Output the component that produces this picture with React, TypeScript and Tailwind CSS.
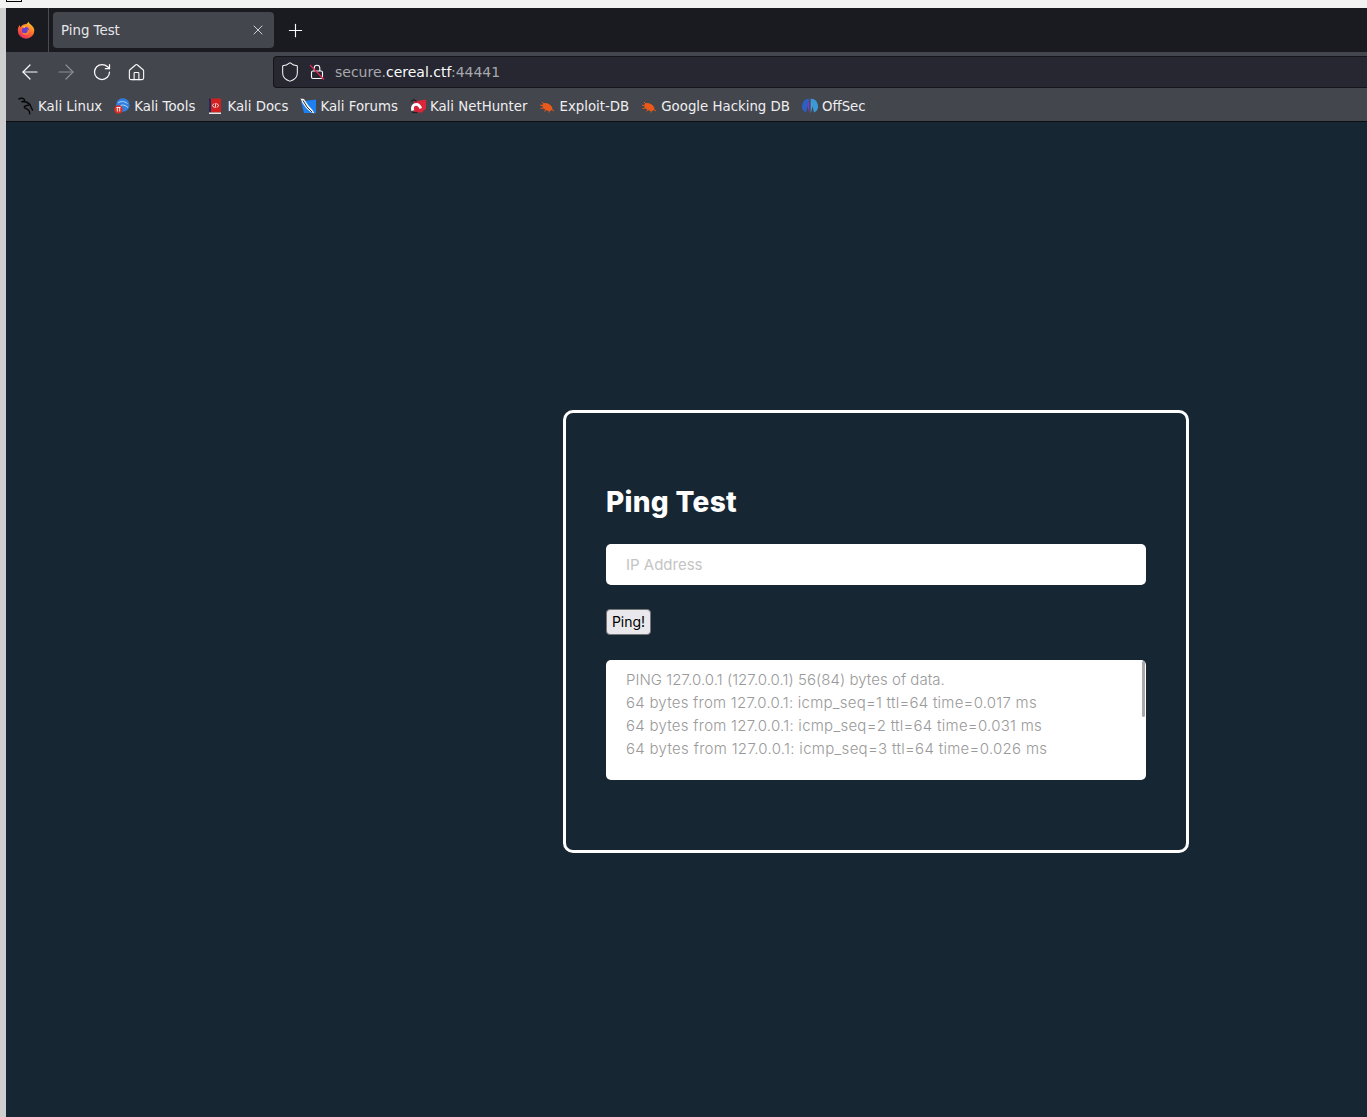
import React from "react";
import { ArrowLeft, ArrowRight, RotateCw, House, Plus, X, Shield } from "lucide-react";

const chromeFont = "font-['DejaVu_Sans',sans-serif]";
const pageFont = "font-['Inter','Open_Sans',sans-serif]";

function FirefoxLogo() {
  return (
    <svg width="18" height="18" viewBox="0 0 18 18">
      <defs>
        <linearGradient id="fx" x1="0.8" y1="0" x2="0.2" y2="1">
          <stop offset="0" stopColor="#ffd02e" />
          <stop offset="0.5" stopColor="#ff6a2c" />
          <stop offset="1" stopColor="#e5246b" />
        </linearGradient>
      </defs>
      <path d="M11.500 0.500c.3 1.800 1.500 2.500 3 3.700 1.800 1.500 2.800 3.200 2.800 5.300A8.200 8.200 0 0 1 .8 9.500c0-2.200.7-4 1.900-5.400.1 1 .4 1.700.9 2.200C4.600 4.200 6.500 3.300 8 3.200c1.600-.1 3-1 3.500-2.700z" fill="url(#fx)" />
      <circle cx="8.500" cy="9.500" r="3.600" fill="#6a3fd0" />
      <path d="M4.800 5.800c1.500-1.200 3.500-1.200 4.700-.3-1 .2-1.500.7-1.600 1.500-1.200-.1-2.300-.5-3.100-1.200z" fill="#ffb03a" />
      <path d="M12.200 9.500A3.800 3.800 0 0 1 5 11.500c1.500 1 4.500 1.200 5.500-.5.400-.8.200-1.800-.5-2.500 1 .1 1.800.4 2.200 1z" fill="#ff8a2c" />
    </svg>
  );
}

function KaliDragon() {
  return (
    <svg width="16" height="18" viewBox="0 0 16 18" fill="none" stroke="#08080a" strokeWidth="1.400" strokeLinecap="round">
      <path d="M0.800 2c2.200-1.300 5-.8 5.700.8C7 4.200 5.300 5 3.300 4.600c3-.5 6.500.6 8.300 2.700 1.500 1.800 1.500 4 3 5.700" />
      <path d="M11.800 7.500c-1.800 1.400-5 .7-5.600 2.400-.3 1.100 2.300 1.900 4 3 1.100.8 1.700 2.200 1.500 4" />
    </svg>
  );
}

function KaliTools() {
  return (
    <svg width="16" height="16" viewBox="0 0 16 16">
      <circle cx="8.800" cy="7" r="6.800" fill="#2f7fe0" />
      <path d="M4 5c2.500-2 6-2 9.500.5M6.500 7.500c2-1 5-.5 7.500 2" stroke="#d5e6fa" strokeWidth="0.800" fill="none" />
      <circle cx="4.500" cy="11.500" r="4.200" fill="#d93025" />
      <path d="M2.500 9.500h4M3.300 9.500v4M5.700 9.500v4" stroke="#fff" strokeWidth="0.900" />
    </svg>
  );
}

function KaliDocs() {
  return (
    <svg width="16" height="17" viewBox="0 0 16 17">
      <rect x="2" y="0.500" width="12" height="14" fill="#d21f1f" />
      <rect x="2" y="0.500" width="2" height="14" fill="#1f2b5a" />
      <rect x="2" y="14.500" width="12" height="1.500" fill="#e8e8e8" />
      <path d="M7 5.500 5.500 7.500 7 9.500M10 5.500l1.500 2L10 9.500M9 5 8 10" stroke="#fff" strokeWidth="0.900" fill="none" />
    </svg>
  );
}

function KaliForums() {
  return (
    <svg width="16" height="16" viewBox="0 0 16 16">
      <path d="M1 3.500 16 1.500v13.500H4z" fill="#1d7ff0" />
      <path d="M0.500 .5 4 1l4 6 4.500 5 2 3.500L10.500 14 6 10 2.500 5z" fill="#f4f6f8" />
      <path d="M3 2.500l4 6.500 5 5" stroke="#1a1a1a" strokeWidth="0.900" fill="none" />
    </svg>
  );
}

function KaliNetHunter() {
  return (
    <svg width="16" height="16" viewBox="0 0 16 16">
      <path d="M4 3.500 16 1.500v9L12 14.500H4z" fill="#d9263a" />
      <path d="M1.500 13c-1.500-4.500 1.200-8 4.800-8 2.800 0 5 2 5.700 5l-2.500 1c-.5-2-1.800-3.300-3.300-3.300-2 0-3 2-2 4.500z" fill="#fff" />
      <path d="M1 3.500 4 1.500l2.500 2" stroke="#222" strokeWidth="1.100" fill="none" />
      <path d="M2 14.500h5.500" stroke="#222" strokeWidth="1.300" />
    </svg>
  );
}

function ExploitBug() {
  return (
    <svg width="16" height="16" viewBox="0 0 16 16">
      <ellipse cx="8.300" cy="9" rx="5.500" ry="3.300" transform="rotate(28 8.300 9)" fill="#e8591a" />
      <path d="M3 4l3 3M1 7l3.500 1M1.500 10.500 5 10M5.500 13.500l2-2.500M10 14.500l.5-2.500M15 13l-3-2" stroke="#e8591a" strokeWidth="1" />
    </svg>
  );
}

function OffSecLogo() {
  return (
    <svg width="16" height="16" viewBox="0 0 16 16">
      <path d="M7.300 .8A7.300 7.300 0 0 0 4 14.600z" fill="#2a5fc4" />
      <path d="M8.700 .8A7.300 7.300 0 0 1 12 14.600z" fill="#3a9ad9" />
      <path d="M7.300 .8 5.300 8 7.300 15.200z" fill="#7a3cc8" />
      <path d="M8.700 .8 10.700 8 8.700 15.200z" fill="#4aa3e0" />
    </svg>
  );
}

function InsecureLock() {
  return (
    <svg width="16" height="18" viewBox="0 0 16 18" fill="none">
      <path d="M5.200 8V5a2.800 2.800 0 0 1 5.600 0v3" stroke="#fbfbfe" strokeWidth="1.100" />
      <rect x="2.500" y="8" width="11" height="7.500" rx="1.500" stroke="#fbfbfe" strokeWidth="1.100" />
      <path d="M1 2 15 16.500" stroke="#e22850" strokeWidth="1.200" />
    </svg>
  );
}

const bookmarks = [
  { name: "Kali Linux", icon: <KaliDragon /> },
  { name: "Kali Tools", icon: <KaliTools /> },
  { name: "Kali Docs", icon: <KaliDocs /> },
  { name: "Kali Forums", icon: <KaliForums /> },
  { name: "Kali NetHunter", icon: <KaliNetHunter /> },
  { name: "Exploit-DB", icon: <ExploitBug /> },
  { name: "Google Hacking DB", icon: <ExploitBug /> },
  { name: "OffSec", icon: <OffSecLogo /> },
];

const pingOutput = [
  { text: "PING 127.0.0.1 (127.0.0.1) 56(84) bytes of data.", tracking: "tracking-[0.04px]" },
  { text: "64 bytes from 127.0.0.1: icmp_seq=1 ttl=64 time=0.017 ms", tracking: "tracking-[0.24px]" },
  { text: "64 bytes from 127.0.0.1: icmp_seq=2 ttl=64 time=0.031 ms", tracking: "tracking-[0.26px]" },
  { text: "64 bytes from 127.0.0.1: icmp_seq=3 ttl=64 time=0.026 ms", tracking: "tracking-[0.3px]" },
];

export default function App() {
  return (
    <div className="flex h-[1117px] w-[1367px] flex-col overflow-hidden bg-[#cfcfcf]">
      {/* Desktop title strip */}
      <div className="h-2 shrink-0 bg-[#f2f2f2]">
        <div className="ml-1.5 h-[2px] w-4 border-x border-b border-black" />
      </div>

      <div className="ml-1.5 flex min-h-0 flex-1 flex-col">
        {/* Tab strip */}
        <div className={`flex h-[44px] shrink-0 items-center bg-[#1a1b20] text-[#fbfbfe] ${chromeFont}`}>
          <div className="flex h-full w-[43px] items-center justify-center border-r border-[#4a4a52] pr-0.5">
            <FirefoxLogo />
          </div>
          <div className="ml-1 flex h-9 w-[221px] items-center justify-between rounded bg-[#44464d] pl-2 pr-2 text-[13.33px] text-[#e6e6ea]">
            <span className="pt-0.5">Ping Test</span>
            <X size={16} strokeWidth={1.300} />
          </div>
          <div className="ml-[11px] flex items-center">
            <Plus size={21} strokeWidth={1.300} />
          </div>
        </div>

        {/* Navigation bar */}
        <div className={`flex h-10 shrink-0 items-center bg-[#44464d] ${chromeFont}`}>
          <div className="flex w-[267px] items-center pl-1.5 text-[#fbfbfe]">
            <span className="flex w-9 justify-center"><ArrowLeft size={24} strokeWidth={1.200} /></span>
            <span className="flex w-9 justify-center"><ArrowRight size={24} strokeWidth={1.200} className="opacity-40" /></span>
            <span className="flex w-9 justify-center"><RotateCw size={20} strokeWidth={1.500} /></span>
            <span className="flex w-8 justify-center"><House size={19} strokeWidth={1.400} /></span>
          </div>
          <div className="flex h-8 flex-1 items-center rounded-l border border-r-0 border-[#16151b] bg-[#262730] pl-[5px] text-sm">
            <Shield size={22} strokeWidth={1.100} className="text-[#fbfbfe]" />
            <span className="ml-2 flex"><InsecureLock /></span>
            <span className="ml-2.5 text-[#a8a8ae]">
              secure.<span className="text-[#fbfbfe]">cereal.ctf</span>:44441
            </span>
          </div>
        </div>

        {/* Bookmarks toolbar */}
        <div className={`flex h-[30px] shrink-0 items-center gap-3 border-b border-[#0d0d10] bg-[#44464d] pl-3 text-[13.33px] text-[#eeeef0] ${chromeFont}`}>
          {bookmarks.map((b) => (
            <div key={b.name} className="flex items-center gap-1">
              <span className="flex w-4 justify-center">{b.icon}</span>
              <span>{b.name}</span>
            </div>
          ))}
        </div>

        {/* Page */}
        <main className={`min-h-0 flex-1 bg-[#162633] pl-[557px] pt-[288px] ${pageFont}`}>
          <div className="h-[443px] w-[626px] rounded-[10px] border-[3px] border-white px-10 pt-[70px]">
            <h1 className="text-[28px] leading-[38px] font-extrabold tracking-[0.3px] text-white">Ping Test</h1>
            <input
              type="text"
              placeholder="IP Address"
              className="mt-[23px] block h-[41px] w-[540px] rounded-[5px] bg-white px-5 text-[15px] placeholder:text-[#c4c4c4]"
            />
            <button className="mt-6 block h-[26px] w-[45px] rounded-[4px] border-[1.5px] border-[#767676] bg-[#e9e9ed] text-sm text-black">
              Ping!
            </button>
            <div className="relative mt-[25px] h-[120px] w-[540px] overflow-hidden rounded-[5px] bg-white px-5 pt-2 text-[15px] leading-[23px] font-light text-[#9a9a9a]">
              {pingOutput.map((line) => (
                <div key={line.text} className={line.tracking}>{line.text}</div>
              ))}
              <div className="absolute right-px top-px h-14 w-[3px] rounded-sm bg-[#a8a8a8]" />
            </div>
          </div>
        </main>
      </div>
    </div>
  );
}
